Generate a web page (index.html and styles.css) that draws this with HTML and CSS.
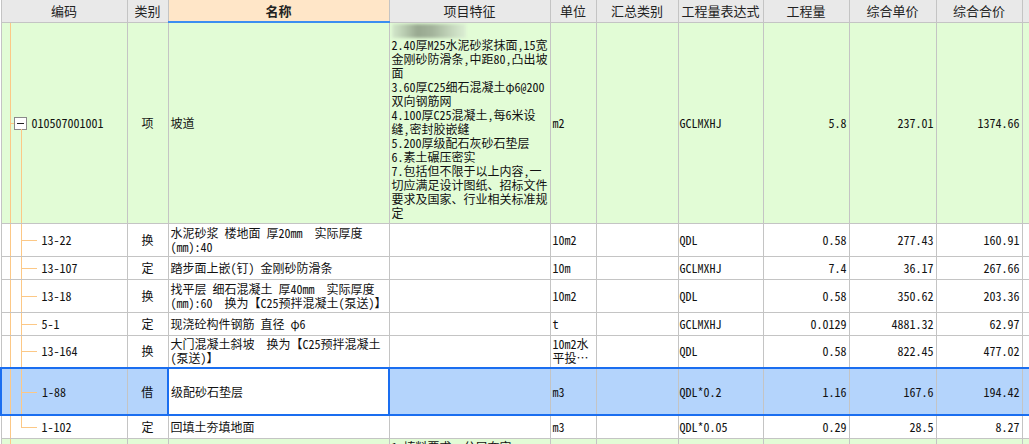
FILE: index.html
```html
<!DOCTYPE html>
<html lang="zh-CN">
<head>
<meta charset="utf-8">
<title>清单</title>
<link rel="stylesheet" href="styles.css">
</head>
<body>
<table class="grid">
  <colgroup>
    <col class="c-code"><col class="c-type"><col class="c-name"><col class="c-feat"><col class="c-unit"><col class="c-sum"><col class="c-expr"><col class="c-qty"><col class="c-price"><col class="c-total"><col class="c-extra">
  </colgroup>
  <thead>
    <tr class="head">
      <th>编码</th><th>类别</th><th class="h-name">名称</th><th>项目特征</th><th>单位</th><th>汇总类别</th><th>工程量表达式</th><th>工程量</th><th>综合单价</th><th>综合合价</th><th></th>
    </tr>
  </thead>
  <tbody>
    <tr class="item r-item">
      <td class="code item-code"><span class="ln v-outer"></span><span class="ln h-item"></span><span class="box"></span><span class="ln v-start"></span>010507001001</td>
      <td class="type">项</td>
      <td class="name">坡道</td>
      <td class="feat"><div class="blur"></div>2.40厚M25水泥砂浆抹面,15宽<br>金刚砂防滑条,中距80,凸出坡<br>面<br>3.60厚C25细石混凝土φ6@200<br>双向钢筋网<br>4.100厚C25混凝土,每6米设<br>缝,密封胶嵌缝<br>5.200厚级配石灰砂石垫层<br>6.素土碾压密实<br>7.包括但不限于以上内容，一<br>切应满足设计图纸、招标文件<br>要求及国家、行业相关标准规<br>定</td>
      <td class="unit">m2</td><td></td><td class="expr">GCLMXHJ</td><td class="num">5.8</td><td class="num">237.01</td><td class="num">1374.66</td><td></td>
    </tr>
    <tr class="sub r-two">
      <td class="code"><span class="ln v-outer"></span><span class="ln v-inner"></span><span class="ln h-child"></span>13-22</td>
      <td class="type">换</td>
      <td class="name">水泥砂浆 楼地面 厚20mm  实际厚度<br>(mm):40</td>
      <td></td><td class="unit">10m2</td><td></td><td class="expr">QDL</td><td class="num">0.58</td><td class="num">277.43</td><td class="num">160.91</td><td></td>
    </tr>
    <tr class="sub r-one">
      <td class="code"><span class="ln v-outer"></span><span class="ln v-inner"></span><span class="ln h-child"></span>13-107</td>
      <td class="type">定</td>
      <td class="name">踏步面上嵌(钉) 金刚砂防滑条</td>
      <td></td><td class="unit">10m</td><td></td><td class="expr">GCLMXHJ</td><td class="num">7.4</td><td class="num">36.17</td><td class="num">267.66</td><td></td>
    </tr>
    <tr class="sub r-two">
      <td class="code"><span class="ln v-outer"></span><span class="ln v-inner"></span><span class="ln h-child"></span>13-18</td>
      <td class="type">换</td>
      <td class="name">找平层 细石混凝土 厚40mm  实际厚度<br>(mm):60  换为【C25预拌混凝土(泵送)】</td>
      <td></td><td class="unit">10m2</td><td></td><td class="expr">QDL</td><td class="num">0.58</td><td class="num">350.62</td><td class="num">203.36</td><td></td>
    </tr>
    <tr class="sub r-one">
      <td class="code"><span class="ln v-outer"></span><span class="ln v-inner"></span><span class="ln h-child"></span>5-1</td>
      <td class="type">定</td>
      <td class="name">现浇砼构件钢筋 直径 φ6</td>
      <td></td><td class="unit">t</td><td></td><td class="expr">GCLMXHJ</td><td class="num">0.0129</td><td class="num">4881.32</td><td class="num">62.97</td><td></td>
    </tr>
    <tr class="sub r-two">
      <td class="code"><span class="ln v-outer"></span><span class="ln v-inner"></span><span class="ln h-child"></span>13-164</td>
      <td class="type">换</td>
      <td class="name">大门混凝土斜坡  换为【C25预拌混凝土<br>(泵送)】</td>
      <td></td><td class="unit">10m2水<br>平投…</td><td></td><td class="expr">QDL</td><td class="num">0.58</td><td class="num">822.45</td><td class="num">477.02</td><td></td>
    </tr>
    <tr class="sub sel r-sel">
      <td class="code sel-first"><span class="ln v-outer"></span><span class="ln v-inner"></span><span class="ln h-child"></span>1-88</td>
      <td class="type">借</td>
      <td class="name editing">级配砂石垫层</td>
      <td></td><td class="unit">m3</td><td></td><td class="expr">QDL*0.2</td><td class="num">1.16</td><td class="num">167.6</td><td class="num">194.42</td><td></td>
    </tr>
    <tr class="sub r-one">
      <td class="code"><span class="ln v-outer"></span><span class="ln v-last"></span><span class="ln h-child"></span>1-102</td>
      <td class="type">定</td>
      <td class="name">回填土夯填地面</td>
      <td></td><td class="unit">m3</td><td></td><td class="expr">QDL*0.05</td><td class="num">0.29</td><td class="num">28.5</td><td class="num">8.27</td><td></td>
    </tr>
    <tr class="item r-next">
      <td class="code"><span class="ln v-outer"></span></td>
      <td></td><td></td>
      <td class="feat">1.填料要求：分层夯实</td>
      <td></td><td></td><td></td><td></td><td></td><td></td><td></td>
    </tr>
  </tbody>
</table>
</body>
</html>
```

FILE: styles.css
```css
html, body {
  margin: 0;
  padding: 0;
  background: #ffffff;
  overflow: hidden;
  height: 444px;
}

body {
  font-family: "Noto Sans CJK SC", sans-serif;
  font-size: 12px;
  line-height: 14px;
  color: #111;
  font-feature-settings: "hwid" 1;
}

.grid {
  border-collapse: collapse;
  table-layout: fixed;
  width: 1046px;
}

.c-code { width: 126px; }
.c-type { width: 41px; }
.c-name { width: 221px; }
.c-feat { width: 161px; }
.c-unit { width: 46px; }
.c-sum { width: 82px; }
.c-expr { width: 85px; }
.c-qty { width: 86px; }
.c-price { width: 87px; }
.c-total { width: 86px; }
.c-extra { width: 25px; }

.grid th,
.grid td {
  border: 1px solid #c4c4c4;
  padding: 0 3px;
  white-space: pre;
  overflow: hidden;
  vertical-align: middle;
  text-align: left;
}

.grid thead th {
  border-top: 0;
  height: 21px;
  background: #e9e9e9;
  font-weight: normal;
  text-align: center;
  font-size: 13px;
  color: #222;
}

.grid thead th.h-name {
  background: #ffe6c8;
  font-weight: bold;
  border-bottom: 2px solid #3c8ef0;
}

.item td { background: #e2fcd6; }
.sub td { background: #ffffff; }

.r-item { height: 201px; }
.r-two { height: 33px; }
.r-one { height: 23px; }
.r-sel { height: 47px; }
.r-next { height: 30px; }

.r-next td { vertical-align: top; padding-top: 2px; }

.grid td.type { text-align: center; }
.grid td.num { text-align: right; padding-right: 2px; }
.grid td.name { padding-left: 2px; }
.grid td.unit { padding-left: 2px; }
.grid td.expr { padding-left: 1px; }

.grid td.feat {
  vertical-align: top;
  padding: 1px 0 0 2px;
}

.blur {
  width: 74px;
  height: 14px;
  background: linear-gradient(90deg, #d4e8cc 0%, #bccfb4 15%, #98a890 35%, #a4b49c 55%, #c2d4ba 78%, #dcefd4 100%);
  filter: blur(1.5px);
}

/* tree column */
.grid td.code {
  position: relative;
  padding-left: 40px;
}
.grid td.item-code { padding-left: 30px; }

.ln {
  position: absolute;
  background: #fcc886;
}
.v-outer { left: 8px; top: -1px; bottom: -1px; width: 1px; }
.h-item { left: 8px; width: 5px; top: 50%; height: 1px; }
.v-start { left: 19px; top: calc(50% + 6px); bottom: -1px; width: 1px; }
.v-inner { left: 19px; top: -1px; bottom: -1px; width: 1px; }
.v-last { left: 19px; top: -1px; height: calc(50% + 1px); width: 1px; }
.h-child { left: 19px; width: 16px; top: 50%; height: 1px; }

.box {
  position: absolute;
  left: 12px;
  top: calc(50% - 6px);
  width: 13px;
  height: 13px;
  box-sizing: border-box;
  border: 1px solid #8a8a8a;
  background: #ffffff;
}
.box::after {
  content: "";
  position: absolute;
  left: 2px;
  right: 2px;
  top: 5px;
  height: 1px;
  background: #222;
}

/* selected row */
.sel td {
  background: #b4d4fc;
  border-top: 2px solid #1a6ef0;
  border-bottom: 2px solid #1a6ef0;
}
.sel td.sel-first { border-left: 2px solid #1a6ef0; }
.sel td.editing {
  background: #ffffff;
  border: 2px solid #1a6ef0;
}
```
